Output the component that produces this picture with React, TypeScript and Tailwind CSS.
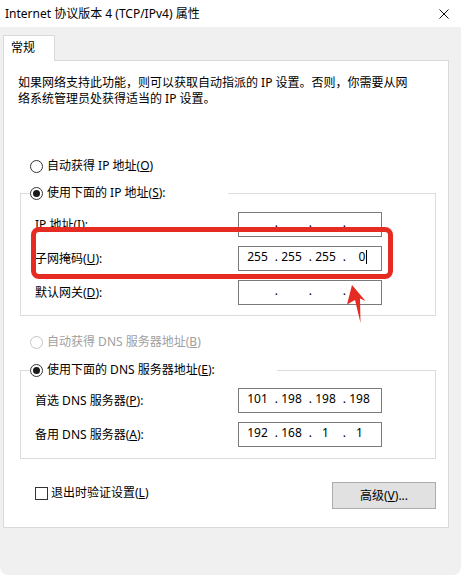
import React from "react";

const font = "font-['Noto_Sans','Noto_Sans_CJK_SC',sans-serif]";

function Radio({ checked, disabled }: { checked?: boolean; disabled?: boolean }) {
    return (
        <span
            className={`w-[13px] h-[13px] rounded-full border bg-white flex items-center justify-center shrink-0 ${
                disabled ? "border-[#c4c4c4]" : "border-[#333333]"
            }`}
        >
            {checked && <span className="w-[7px] h-[7px] rounded-full bg-[#1a1a1a]" />}
        </span>
    );
}

function IpField({ parts, cursor }: { parts: string[]; cursor?: boolean }) {
    return (
        <div className="w-[144px] h-[25px] border border-[#7a7a7a] bg-white flex items-center pl-[5px] pb-[3px] leading-[16px]">
            {parts.map((p, i) => (
                <React.Fragment key={i}>
                    {i > 0 && <span className="w-[7px] text-right">.</span>}
                    <span className="w-[27px] flex items-center justify-center">
                        {cursor && i === 3 ? (
                            <span className="flex items-center pl-[7px]">
                                {p}
                                <span className="w-px h-[14px] bg-black ml-px" />
                            </span>
                        ) : (
                            p
                        )}
                    </span>
                </React.Fragment>
            ))}
        </div>
    );
}

function Row({ label, children }: { label: React.ReactNode; children: React.ReactNode }) {
    return (
        <div className="flex items-center h-[25px]">
            <span className="w-[203px] leading-[16px]">{label}</span>
            {children}
        </div>
    );
}

const U = ({ children }: { children: React.ReactNode }) => <span className="underline">{children}</span>;

export default function App() {
    const empty = ["", "", "", ""];

    return (
        <div className={`relative w-[461px] h-[575px] bg-[#f0f0f0] rounded-b-[8px] overflow-hidden text-[12px] text-black ${font}`}>
            {/* title bar */}
            <div className="h-[27px] bg-white flex items-center justify-between pl-[5px] pr-[12px]">
                <span className="leading-[16px]">Internet 协议版本 4 (TCP/IPv4) 属性</span>
                <svg width="10" height="10" viewBox="0 0 10 10">
                    <path d="M0.5 0.5L9.5 9.5M9.5 0.5L0.5 9.5" stroke="#111" strokeWidth="1" />
                </svg>
            </div>

            {/* tab */}
            <div className="pt-[8px] pl-[3px]">
                <div className="relative z-10 w-[52px] h-[26px] -mb-px bg-white border border-b-0 border-[#d9d9d9] pl-[7px] pt-[4px] leading-[16px]">
                    常规
                </div>
            </div>

            {/* tab panel */}
            <div className="ml-[3px] w-[446px] h-[468px] bg-white border border-[#d9d9d9] flex flex-col">
                <p className="ml-[14px] mt-[14px] leading-[16px]">
                    如果网络支持此功能，则可以获取自动指派的 IP 设置。否则，你需要从网
                    <br />
                    络系统管理员处获得适当的 IP 设置。
                </p>

                <div className="ml-[26px] mt-[51px] h-[16px] flex items-center gap-[4px] leading-[16px]">
                    <Radio />
                    <span>
                        自动获得 IP 地址(<U>O</U>)
                    </span>
                </div>

                <fieldset className="ml-[16px] mt-[11px] w-[416px] border border-[#dcdcdc] pb-[10px]">
                    <legend className="ml-[9px]">
                        <span className="w-[198px] h-[16px] flex items-center gap-[4px] bg-white leading-[16px]">
                            <Radio checked />
                            <span>
                                使用下面的 IP 地址(<U>S</U>):
                            </span>
                        </span>
                    </legend>
                    <div className="pt-[11px] pl-[14px] flex flex-col gap-[9px]">
                        <Row label={<>IP 地址(<U>I</U>):</>}>
                            <IpField parts={empty} />
                        </Row>
                        <Row label={<>子网掩码(<U>U</U>):</>}>
                            <IpField parts={["255", "255", "255", "0"]} cursor />
                        </Row>
                        <Row label={<>默认网关(<U>D</U>):</>}>
                            <IpField parts={empty} />
                        </Row>
                    </div>
                </fieldset>

                <div className="ml-[26px] mt-[18px] h-[16px] flex items-center gap-[4px] leading-[16px] text-[#a0a0a0]">
                    <Radio disabled />
                    <span>
                        自动获得 DNS 服务器地址(<U>B</U>)
                    </span>
                </div>

                <fieldset className="ml-[16px] mt-[12px] w-[416px] border border-[#dcdcdc] pb-[11px]">
                    <legend className="ml-[9px]">
                        <span className="w-[247px] h-[16px] flex items-center gap-[4px] bg-white leading-[16px]">
                            <Radio checked />
                            <span>
                                使用下面的 DNS 服务器地址(<U>E</U>):
                            </span>
                        </span>
                    </legend>
                    <div className="pt-[10px] pl-[14px] flex flex-col gap-[9px]">
                        <Row label={<>首选 DNS 服务器(<U>P</U>):</>}>
                            <IpField parts={["101", "198", "198", "198"]} />
                        </Row>
                        <Row label={<>备用 DNS 服务器(<U>A</U>):</>}>
                            <IpField parts={["192", "168", "1", "1"]} />
                        </Row>
                    </div>
                </fieldset>

                <div className="mt-[23px] ml-[31px] mr-[12px] flex justify-between items-start">
                    <div className="mt-[3px] h-[16px] flex items-center gap-[3px] leading-[16px]">
                        <span className="w-[13px] h-[13px] border border-[#333333] bg-white" />
                        <span>
                            退出时验证设置(<U>L</U>)
                        </span>
                    </div>
                    <button className="w-[104px] h-[27px] bg-[#e1e1e1] border border-[#adadad] flex items-center justify-center leading-[16px]">
                        高级(<U>V</U>)...
                    </button>
                </div>
            </div>

            {/* red annotation */}
            <div className="absolute left-[31px] top-[227px] w-[362px] h-[52px] border-[5px] border-[#e62b22] rounded-[8px]" />
            <svg className="absolute left-[340px] top-[280px]" width="30" height="48" viewBox="0 0 30 48">
                <path d="M12 5 L25.5 21 L20 18.5 L20.5 43 L15 20 L7 24.5 Z" fill="#e62b22" />
            </svg>
        </div>
    );
}
